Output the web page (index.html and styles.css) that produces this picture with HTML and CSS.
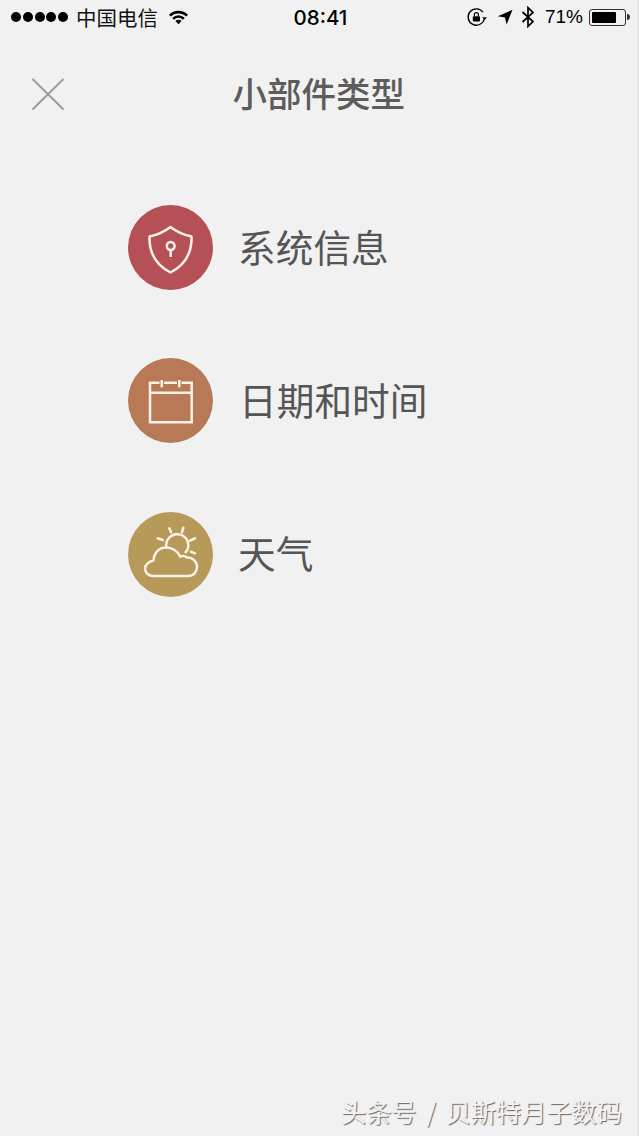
FILE: index.html
```html
<!DOCTYPE html>
<html lang="zh-CN">
<head>
<meta charset="utf-8">
<title>小部件类型</title>
<link rel="stylesheet" href="styles.css">
</head>
<body>
<div class="screen">
  <div class="status-bar">
    <div class="status-left">
      <div class="signal"><i></i><i></i><i></i><i></i><i></i></div>
      <span class="carrier">中国电信</span>
      <svg class="wifi" width="21" height="16" viewBox="0 0 22 16">
        <path d="M1 5.6A14 14 0 0 1 21 5.6L19 7.6A11.2 11.2 0 0 0 3 7.6Z" fill="#000"/>
        <path d="M4.4 9A9.2 9.2 0 0 1 17.6 9L15.7 10.900A6.500 6.500 0 0 0 6.300 10.900Z" fill="#000"/>
        <path d="M7.800 12.300A4.500 4.500 0 0 1 14.200 12.300L11 15.600Z" fill="#000"/>
      </svg>
    </div>
    <span class="clock">08:41</span>
    <div class="status-right">
      <svg class="rotation-lock" width="22" height="20" viewBox="0 0 22 20">
        <path d="M18.400 11.500A8.200 8.200 0 1 1 17 5.200" fill="none" stroke="#000" stroke-width="1.300"/>
        <path d="M16.200 10.200H21L18.600 13Z" fill="#000"/>
        <rect x="6.800" y="9.200" width="7.200" height="5.200" rx="0.800" fill="#000"/>
        <path d="M8.400 9.200V7.600A2 2 0 0 1 12.400 7.600V9.200" fill="none" stroke="#000" stroke-width="1.200"/>
      </svg>
      <svg class="location" width="16" height="16" viewBox="0 0 16 16">
        <path d="M15.500 0.800L9.600 15.400L8 8.400L0.800 7.200Z" fill="#000"/>
      </svg>
      <svg class="bluetooth" width="14" height="22" viewBox="0 0 14 22">
        <path d="M1.500 6L12 15.600L7 20.400V1.600L12 6.400L1.500 16" fill="none" stroke="#000" stroke-width="1.700"/>
      </svg>
      <span class="percent">71%</span>
      <div class="battery">
        <div class="battery-shell"><div class="battery-level"></div></div>
        <div class="battery-cap"></div>
      </div>
    </div>
  </div>

  <header class="title-bar">
    <svg class="close" width="34" height="34" viewBox="0 0 34 34">
      <path d="M1.500 2L32.500 32.500M32.500 2L1.500 32.500" stroke="#999" stroke-width="1.800" fill="none"/>
    </svg>
    <h1 class="title">小部件类型</h1>
  </header>

  <ul class="types">
    <li class="type">
      <span class="badge badge-system">
        <svg class="glyph" width="85" height="85" viewBox="0 0 85 85">
          <path d="M42.500 22C36 27 29 30 21.500 31.500C21 47 28 60 42.500 67.500C57 60 64 47 63.500 31.500C56 30 49 27 42.500 22Z" stroke-linejoin="round"/>
          <circle cx="42.700" cy="41" r="3.900"/>
          <path d="M42.700 45V52"/>
        </svg>
      </span>
      <span class="type-name">系统信息</span>
    </li>
    <li class="type">
      <span class="badge badge-date">
        <svg class="glyph" width="85" height="85" viewBox="0 0 85 85">
          <path d="M31.500 24.700H22V64.300H63.700V24.700H53.500M36 24.700H49M22 34.700H63.700"/>
          <path d="M33.700 22V29.300M51.300 22V29.300"/>
        </svg>
      </span>
      <span class="type-name type-name-date">日期和时间</span>
    </li>
    <li class="type">
      <span class="badge badge-weather">
        <svg class="glyph" width="85" height="85" viewBox="0 0 85 85">
          <path d="M25.500 64H60C65.500 64 69 60 69 55C69 49 64 45 59 45.500C57 44 54.500 43.500 52 44.500C50 39 44 35.500 38 35.500C31 35.500 26 41 25.500 48.500C20.500 49.500 17 53 17 56.500C17 61 21 64 25.500 64Z" stroke-linejoin="round"/>
          <path d="M38.500 35.500A11 11 0 1 1 57 41"/>
          <path d="M41.300 16.300L43 20.300M55.300 15.700L54 20.300M29.700 26.300L34.700 28M67 26.300L62 28.700M67 41.300L62.700 39.700" stroke-linecap="round"/>
        </svg>
      </span>
      <span class="type-name">天气</span>
    </li>
  </ul>

  <footer class="watermark">头条号 / 贝斯特月子数码</footer>
</div>
</body>
</html>
```

FILE: styles.css
```css
* {
  box-sizing: border-box;
}

html,
body {
  margin: 0;
  padding: 0;
  height: 100%;
}

body {
  background: #f1f1f1;
  font-family: "Noto Sans CJK SC", "Liberation Sans", sans-serif;
  color: #555;
  overflow: hidden;
}

.screen {
  display: flex;
  flex-direction: column;
  height: 1136px;
  border-right: 2px solid #e4e4e4;
}

/* status bar */
.status-bar {
  display: grid;
  grid-template-columns: 1fr auto 1fr;
  align-items: center;
  height: 34px;
  padding: 0 7px 0 11px;
  color: #000;
}

.status-left,
.status-right {
  display: flex;
  align-items: center;
}

.status-right {
  justify-content: flex-end;
}

.signal {
  display: flex;
  gap: 1.750px;
}

.signal i {
  width: 10px;
  height: 10px;
  border-radius: 50%;
  background: #000;
}

.carrier {
  margin-left: 8px;
  font-size: 20.500px;
  line-height: 24px;
  color: #111;
}

.wifi {
  margin-left: 10px;
}

.clock {
  font-family: Inter, "Liberation Sans", sans-serif;
  font-size: 20.500px;
  font-weight: 500;
}

.rotation-lock {
  margin-right: 9px;
}

.location {
  margin-right: 8px;
}

.bluetooth {
  margin-right: 10px;
}

.percent {
  font-family: "Liberation Sans", sans-serif;
  font-size: 19px;
  margin-right: 6px;
}

.battery {
  display: flex;
  align-items: center;
}

.battery-shell {
  width: 37px;
  height: 17px;
  padding: 2px;
  border: 1px solid #333;
  border-radius: 3px;
}

.battery-level {
  width: 78%;
  height: 100%;
  background: #000;
  border-radius: 1px;
}

.battery-cap {
  width: 3px;
  height: 6px;
  margin-left: 1px;
  background: #333;
  border-radius: 0 3px 3px 0;
}

/* title row */
.title-bar {
  display: flex;
  align-items: center;
  height: 120px;
  padding-left: 31px;
}

.close {
  flex: none;
}

.title {
  margin: 0 0 4px 167.500px;
  font-size: 34.500px;
  line-height: 40px;
  font-weight: 500;
  color: #5c5c5c;
  white-space: nowrap;
}

/* widget types */
.types {
  flex: 1;
  list-style: none;
  margin: 0;
  padding: 51px 0 0 128px;
}

.type {
  display: flex;
  align-items: center;
  height: 85px;
  margin-bottom: 68.400px;
}

.badge {
  flex: none;
  width: 85px;
  height: 85px;
  border-radius: 50%;
}

.badge-system {
  background: #b55156;
}

.badge-date {
  background: #b87957;
}

.badge-weather {
  background: #b79a59;
}

/* icon line work is drawn in the 85-unit box of its badge */
.glyph {
  display: block;
  fill: none;
  stroke: #fbf1e6;
  stroke-width: 2.500;
}

.type-name {
  margin: 0 0 4px 25px;
  font-size: 37.700px;
  line-height: 44px;
  color: #555;
  white-space: nowrap;
}

.type-name-date {
  margin-left: 26px;
}

/* embossed caption along the bottom edge */
.watermark {
  align-self: flex-end;
  margin: 0 15px 9px 0;
  font-size: 25.200px;
  line-height: 32px;
  word-spacing: 4px;
  color: #f2f2f2;
  text-shadow: 1px 1px 1px #666;
  white-space: nowrap;
}
```
